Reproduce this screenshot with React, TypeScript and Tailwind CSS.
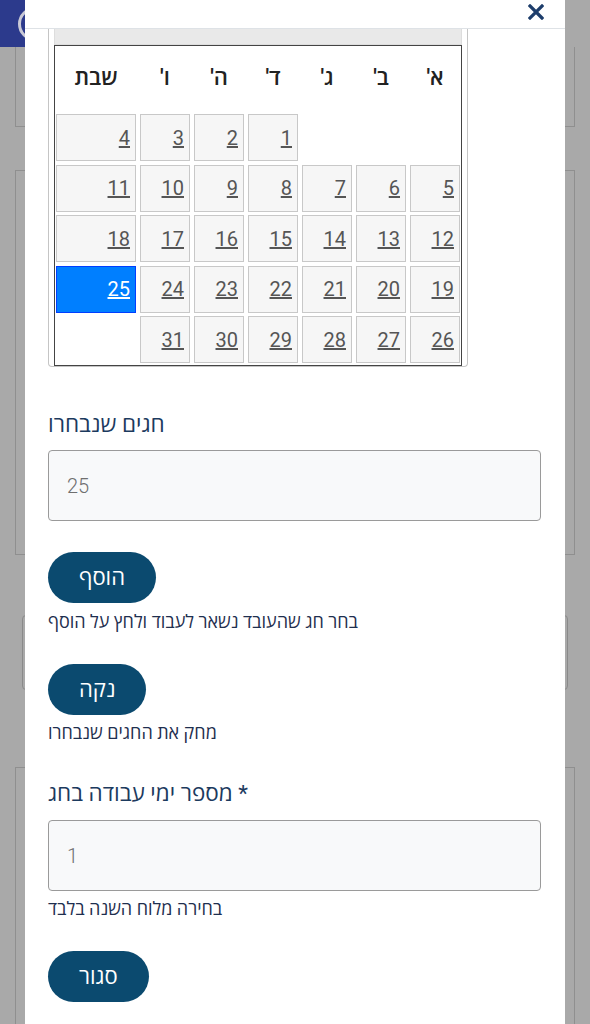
import React from 'react';

const days: (number | null)[] = [
    null, null, null, 1, 2, 3, 4,
    5, 6, 7, 8, 9, 10, 11,
    12, 13, 14, 15, 16, 17, 18,
    19, 20, 21, 22, 23, 24, 25,
    26, 27, 28, 29, 30, 31, null,
];

const weekdays = ["א'", "ב'", "ג'", "ד'", "ה'", "ו'", 'שבת'];

const font = { fontFamily: "Roboto, 'Open Sans', 'Liberation Sans', sans-serif" };

const Background = () => (
    <div className="flex flex-col w-full h-[1024px] bg-[#a9a9a9]">
        <div className="h-[47px] w-[120px] bg-[#2c3a8c] flex items-center pl-[18px] shrink-0">
            <div className="w-[34px] h-[34px] rounded-full border-[3px] border-[#c9c9d6]"></div>
        </div>
        <div className="mx-[15px] h-[80px] border border-t-0 border-[#8f8f8f] shrink-0"></div>
        <div className="mx-[15px] mt-[43px] h-[385px] border border-[#8f8f8f] shrink-0"></div>
        <div className="mx-[22px] mt-[60px] h-[75px] border border-[#8a8a8a] rounded shrink-0"></div>
        <div className="mx-[15px] mt-[77px] flex-1 border border-b-0 border-[#8f8f8f]"></div>
    </div>
);

const Calendar = () => (
    <div className="w-[420px] border border-t-0 border-[#c5c5c5] rounded-b px-[5px]">
        <div className="h-[16px] bg-[#e9e9e9] border-x border-b border-[#dddddd]"></div>
        <div dir="rtl" className="border border-[#444] px-[1px] pb-[2px]">
            <div className="grid grid-cols-[50px_50px_50px_50px_50px_50px_80px] gap-x-[4px] h-[63px] items-center">
                {weekdays.map((w) => (
                    <div key={w} className="text-center text-[22px] font-semibold text-[#222]">
                        {w}
                    </div>
                ))}
            </div>
            <div className="grid grid-cols-[50px_50px_50px_50px_50px_50px_80px] gap-x-[4px] gap-y-[3.5px] mt-[5px]">
                {days.map((d, i) =>
                    d === null ? (
                        <div key={i} className="h-[47px]"></div>
                    ) : (
                        <div
                            key={i}
                            className={
                                d === 25
                                    ? 'h-[47px] flex items-center justify-start pr-[5px] bg-[#007fff] border border-[#003eff] text-white text-[20px] underline'
                                    : 'h-[47px] flex items-center justify-start pr-[5px] bg-[#f6f6f6] border border-[#c8c8c8] text-[#555] text-[20px] underline'
                            }
                        >
                            {d}
                        </div>
                    )
                )}
            </div>
        </div>
    </div>
);

const PillButton = ({ label }: { label: string }) => (
    <button className="h-[51px] px-[31px] rounded-full bg-[#0b4a6f] text-white text-[22px] self-start">
        {label}
    </button>
);

const Field = ({ value }: { value: string }) => (
    <div className="h-[71px] w-full bg-[#f8f9fa] border border-[#9a9a9a] rounded-[4px] flex items-center pl-[18px] text-[20px] font-light text-[#6f6f6f]">
        {value}
    </div>
);

export default function App() {
    return (
        <div className="relative w-[590px] h-[1024px] overflow-hidden" style={font}>
            <Background />
            <div className="absolute left-[25px] top-0 w-[540px] h-[1024px] bg-white flex flex-col">
                <div className="h-[29px] border-b border-[#dee2e6] flex justify-end pr-[21px] pt-[4px] shrink-0">
                    <svg width="16" height="16" viewBox="0 0 16 16">
                        <path d="M2 2 L14 14 M14 2 L2 14" stroke="#1d3d6b" strokeWidth="3.2" strokeLinecap="square" />
                    </svg>
                </div>
                <div className="flex flex-col pl-[23px] pr-[24px]">
                    <Calendar />
                    <div className="mt-[43px] text-[22.5px] text-[#1c3a5e] leading-[28px]">חגים שנבחרו</div>
                    <div className="mt-[12px]">
                        <Field value="25" />
                    </div>
                    <div className="mt-[31px] flex flex-col">
                        <PillButton label="הוסף" />
                    </div>
                    <div className="mt-[8px] text-[18px] text-[#1f2f4f] leading-[22px]">
                        בחר חג שהעובד נשאר לעבוד ולחץ על הוסף
                    </div>
                    <div className="mt-[31px] flex flex-col">
                        <PillButton label="נקה" />
                    </div>
                    <div className="mt-[7px] text-[18px] text-[#1f2f4f] leading-[22px]">מחק את החגים שנבחרו</div>
                    <div className="mt-[35px] text-[22.5px] text-[#1c3a5e] leading-[28px]">מספר ימי עבודה בחג *</div>
                    <div className="mt-[13px]">
                        <Field value="1" />
                    </div>
                    <div className="mt-[7px] text-[18px] text-[#1f2f4f] leading-[22px]">בחירה מלוח השנה בלבד</div>
                    <div className="mt-[31px] flex flex-col">
                        <PillButton label="סגור" />
                    </div>
                </div>
            </div>
        </div>
    );
}
